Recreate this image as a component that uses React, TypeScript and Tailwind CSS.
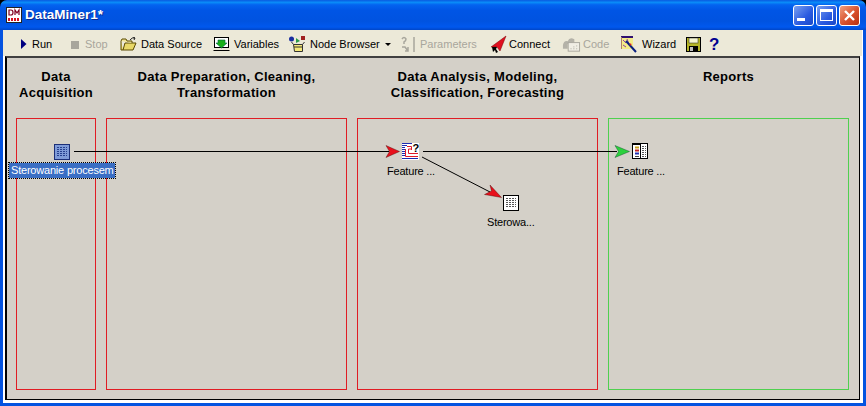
import React from "react";

const Ui = "font-['Liberation_Sans',Arial,sans-serif]";

const RunIcon = () => (
  <svg width="6" height="10" viewBox="0 0 6 10"><path d="M0 0 L5.500 5 L0 10 Z" fill="#000080" /></svg>
);
const StopIcon = () => <div className="w-[8px] h-[8px] bg-[#a8a69c] mt-[1px]" />;
const FolderIcon = () => (
  <svg width="17" height="14" viewBox="0 0 17 14">
    <path d="M1 4 L1 13 L13 13 L16 6 L5 6 L3 13" fill="#e8d868" stroke="#5a4a00" />
    <path d="M1 4 L2 2 L6 2 L7 4 L12 4 L12 6" fill="#f0e498" stroke="#5a4a00" />
    <path d="M10 3 Q12 0 15 1 M15 1 L13 0 M15 1 L14 3" fill="none" stroke="#222" />
  </svg>
);
const VariablesIcon = () => (
  <svg width="17" height="16" viewBox="0 0 17 16">
    <rect x="1.500" y="1.500" width="14" height="10" fill="#fff" stroke="#000" />
    <path d="M0.500 14.500 H16.500" stroke="#000" />
    <path d="M5 4 H12 V7 H14 L8.500 12 L3 7 H5 Z" fill="#18b018" stroke="#064" strokeWidth="0.600" />
  </svg>
);
const NodeBrowserIcon = () => (
  <svg width="17" height="17" viewBox="0 0 17 17">
    <circle cx="2.500" cy="3" r="2.500" fill="#1a2ea0" />
    <rect x="12" y="0" width="4" height="4" fill="#a02020" />
    <path d="M7 2 L11 5 L7 7 Z" fill="#2a9a4a" />
    <path d="M4.500 8.500 L13.500 8.500 L13.500 15.500 L5.500 15.500 Z" fill="#f4e878" stroke="#333" />
    <path d="M4.500 8.500 L2.500 6 M13.500 8.500 L15.500 6 M5 11 H13" stroke="#333" fill="none" />
  </svg>
);
const ParametersIcon = () => (
  <svg width="16" height="17" viewBox="0 0 16 17" fill="none" stroke="#a8a69c" strokeWidth="1.500">
    <path d="M2 3 Q4 0 6 3 Q6 5 4 6 V8" />
    <path d="M2 11 H5 L8 15 M8 11 V15 H5" />
    <path d="M14 1 V16" />
  </svg>
);
const ConnectIcon = () => (
  <svg width="17" height="19" viewBox="0 0 17 19">
    <path d="M16 1 L1 12 L7 12 L10 16 Z" fill="#e01020" stroke="#700" strokeWidth="0.500" />
    <path d="M2 12 L7 12 L6 14 L8 17 L6 18 L5 15 L3 17 Z" fill="#000" />
  </svg>
);
const CodeIcon = () => (
  <svg width="19" height="17" viewBox="0 0 20 17">
    <path d="M1 9 Q2 4 6 5 Q8 0 13 3 L13 6 L6 8 L6 13 L1 13 Z" fill="#b4b2a8" />
    <rect x="6.500" y="6.500" width="12" height="9" fill="#f0eee4" stroke="#a8a69c" />
    <path d="M9 13 H10 M12 13 H13 M15 13 H16 M15 10 H16 M12 11 H13" stroke="#a8a69c" />
  </svg>
);
const WizardIcon = () => (
  <svg width="17" height="17" viewBox="0 0 17 17">
    <rect x="1" y="1" width="12" height="12" fill="#f4ec88" />
    <path d="M1 1 H13" stroke="#301070" strokeWidth="2" />
    <path d="M1.500 1 V13" stroke="#b08060" />
    <path d="M3 4 L6 7 M7 3 L9 8 M3 9 L6 11" stroke="#9040a0" />
    <path d="M6 5 L16 16" stroke="#0a2080" strokeWidth="2" />
    <path d="M10 8 L11 9" stroke="#e02020" strokeWidth="2" />
  </svg>
);
const SaveIcon = () => (
  <svg width="15" height="15" viewBox="0 0 15 15">
    <rect x="0.500" y="0.500" width="14" height="14" fill="#b4b428" stroke="#000" />
    <rect x="3" y="1" width="9" height="5" fill="#f4f4d0" stroke="#222" strokeWidth="0.500" />
    <rect x="3" y="9" width="9" height="5" fill="#000" />
    <rect x="4" y="10" width="3" height="4" fill="#c0c0c0" />
  </svg>
);

const DataIcon = ({ selected }: { selected?: boolean }) => (
  <svg width="16" height="16" viewBox="0 0 16 16">
    <rect x="0.500" y="0.500" width="15" height="15" fill={selected ? "#7f9bd8" : "#fff"} stroke={selected ? "#1c2f78" : "#000"} />
    {[3, 5, 7, 9, 11].map((y) => (
      <path key={y} d={`M3 ${y + 0.5} H13`} stroke={selected ? "#26408f" : "#555"} strokeDasharray="2 1" />
    ))}
  </svg>
);
const FeatureIcon = () => (
  <svg width="17" height="17" viewBox="0 0 17 17">
    <rect width="17" height="17" fill="#fff" />
    <path d="M0 0.500 H10 M0 2.500 H5 M0 4.500 H3 M0 6.500 H3 M0 8.500 H3 M0 10.500 H3 M0 12.500 H3 M0 15.500 H16" stroke="#1c2ab0" />
    <path d="M5 3.500 H9.500 V7 M3.500 6 V13.500 H16 M6.500 6 V10.500 H16 M6.500 6 H9.500" stroke="#e01828" fill="none" />
    <text x="10.500" y="9" fontSize="11" fontWeight="700" fontFamily="Liberation Sans" fill="#000">?</text>
  </svg>
);
const ReportIcon = () => (
  <svg width="16" height="16" viewBox="0 0 16 16">
    <rect x="0.500" y="0.500" width="15" height="15" fill="#fff" stroke="#000" />
    <path d="M8.500 0 V16 M1 1.500 H8" stroke="#000" />
    <path d="M3 4.500 H7" stroke="#c8a020" strokeWidth="2" />
    <path d="M3 7.500 H7" stroke="#c02020" strokeWidth="2" />
    <path d="M3 10.500 H7" stroke="#2030b0" strokeWidth="2" />
    <path d="M3 13.500 H7" stroke="#444" strokeWidth="1" />
    {[3, 5, 7, 9, 11, 13].map((y) => (
      <path key={y} d={`M10 ${y + 0.5} H14`} stroke="#555" strokeDasharray="2 1" />
    ))}
  </svg>
);

const ToolItem = ({ icon, label, off, width, iconBox }: { icon: React.ReactNode; label: string; off?: boolean; width: string; iconBox: string }) => (
  <div className={`flex items-center shrink-0 ${width}`}>
    <div className={`shrink-0 flex items-center ${iconBox}`}>{icon}</div>
    <span className={`text-[11px] whitespace-nowrap ${off ? "text-[#a8a69c]" : "text-black"}`}>{label}</span>
  </div>
);

const WinButton = ({ className, children }: { className: string; children: React.ReactNode }) => (
  <div className={`w-[21px] h-[21px] rounded-[3px] border border-white flex items-center justify-center ${className}`}>
    {children}
  </div>
);

const Heading = ({ className, children }: { className: string; children: React.ReactNode }) => (
  <div className={`text-center text-[13px] leading-[16px] font-bold text-black shrink-0 tracking-[0.3px] ${className}`}>{children}</div>
);

const NodeLabel = ({ className, children }: { className: string; children: React.ReactNode }) => (
  <div className={`absolute text-[11px] leading-[15px] tracking-[-0.2px] text-black whitespace-nowrap ${className}`}>{children}</div>
);

export default function App() {
  return (
    <div className={`w-[866px] h-[406px] flex flex-col overflow-hidden bg-black ${Ui}`}>
      <div className="rounded-t-[7px] h-[30px] shrink-0 flex items-center pl-[6px] pr-[6px] bg-[linear-gradient(180deg,#0a5ae0_0%,#0a8cf8_8%,#0464f0_16%,#0055e5_35%,#0053e0_70%,#0058ee_90%,#0046c8_100%)]">
        <svg width="16" height="16" viewBox="0 0 16 16" className="mr-[3px]">
          <rect x="0.500" y="0.500" width="15" height="15" fill="#fff" stroke="#222" />
          <path d="M3 3 V8 H5 Q7 8 7 5.500 Q7 3 5 3 Z M9 8 V3 L11 6 L13 3 V8" fill="none" stroke="#800020" strokeWidth="1.200" />
          <path d="M2 12.500 H14" stroke="#d81020" strokeWidth="3" strokeDasharray="2 1" />
        </svg>
        <span className="text-white font-bold text-[13.5px] [text-shadow:1px_1px_0_#0a2a90]">DataMiner1*</span>
        <div className="ml-auto flex gap-[2px]">
          <WinButton className="bg-[linear-gradient(135deg,#7aa0f0,#2a5ae0_60%,#1a48c8)]">
            <div className="w-[8px] h-[3px] bg-white mt-[9px] mr-[5px]" />
          </WinButton>
          <WinButton className="bg-[linear-gradient(135deg,#7aa0f0,#2a5ae0_60%,#1a48c8)]">
            <div className="w-[13px] h-[12px] border border-white border-t-[3px]" />
          </WinButton>
          <WinButton className="bg-[linear-gradient(135deg,#f0a080,#d8502c_55%,#b83010)]">
            <svg width="13" height="13" viewBox="0 0 13 13"><path d="M2 2 L11 11 M11 2 L2 11" stroke="#fff" strokeWidth="2.400" /></svg>
          </WinButton>
        </div>
      </div>

      <div className="flex-1 min-h-0 flex flex-col bg-[#0453e0] px-[3px] pb-[3px]">
        <div className="flex-1 min-h-0 flex flex-col bg-white pb-[3px] pr-[1px]">
          <div className="h-[26px] shrink-0 bg-[#ece9d8] flex items-center pl-[18px] pt-[2px]">
            <ToolItem icon={<RunIcon />} label="Run" width="w-[50px]" iconBox="w-[11px]" />
            <ToolItem icon={<StopIcon />} label="Stop" off width="w-[49px]" iconBox="w-[14px]" />
            <ToolItem icon={<FolderIcon />} label="Data Source" width="w-[93px]" iconBox="w-[21px]" />
            <ToolItem icon={<VariablesIcon />} label="Variables" width="w-[76px]" iconBox="w-[21px]" />
            <ToolItem icon={<NodeBrowserIcon />} label="Node Browser" width="w-[96px]" iconBox="w-[21px]" />
            <div className="w-[15px] shrink-0">
              <div className="w-0 h-0 border-x-[3px] border-x-transparent border-t-[3px] border-t-black" />
            </div>
            <ToolItem icon={<ParametersIcon />} label="Parameters" off width="w-[90px]" iconBox="w-[20px]" />
            <ToolItem icon={<ConnectIcon />} label="Connect" width="w-[72px]" iconBox="w-[19px]" />
            <ToolItem icon={<CodeIcon />} label="Code" off width="w-[58px]" iconBox="w-[21px]" />
            <ToolItem icon={<WizardIcon />} label="Wizard" width="w-[66px]" iconBox="w-[22px]" />
            <div className="w-[23px] shrink-0"><SaveIcon /></div>
            <span className="text-[#000090] font-bold text-[17px] leading-none">?</span>
          </div>

          <div className="flex-1 min-h-0 relative bg-[#d4d0c8] border-t-2 border-l-2 border-t-[#404040] border-l-black border-r border-r-black border-b border-b-black mx-[2px] flex flex-col">
            <div className="flex pl-[9px] pt-[11px] h-[60px] shrink-0 gap-[10px]">
              <Heading className="w-[80px]">Data<br />Acquisition</Heading>
              <Heading className="w-[241px]">Data Preparation, Cleaning,<br />Transformation</Heading>
              <Heading className="w-[241px]">Data Analysis, Modeling,<br />Classification, Forecasting</Heading>
              <Heading className="w-[241px]">Reports</Heading>
            </div>
            <div className="flex pl-[9px] gap-[10px] h-[272px] shrink-0">
              <div className="w-[80px] border border-[#e01c24]" />
              <div className="w-[241px] border border-[#e01c24]" />
              <div className="w-[241px] border border-[#e01c24]" />
              <div className="w-[241px] border border-[#4fd04f]" />
            </div>

            <svg className="absolute left-0 top-0 pointer-events-none" width="852" height="338" viewBox="0 0 852 338">
              <path d="M67 93.500 H382" stroke="#000" />
              <path d="M416 93.500 H610" stroke="#000" />
              <path d="M415 99 L483 134" stroke="#000" />
              <path d="M379 87.500 L392.500 93.500 L379 99.500 L382.500 93.500 Z" fill="#e8101c" stroke="#400" strokeWidth="0.400" />
              <path d="M608 87.500 L622.500 93.500 L608 99.500 L611.500 93.500 Z" fill="#2cd03c" stroke="#042" strokeWidth="0.400" />
              <path d="M494.500 139.500 L483 127 L484.500 133 L477.500 136.500 Z" fill="#e8101c" stroke="#400" strokeWidth="0.400" />
            </svg>

            <div className="absolute left-[47px] top-[86px]"><DataIcon selected /></div>
            <div className="absolute left-[2px] top-[105px] h-[15px] w-[106px] bg-[#3a6ec4] outline-dotted outline-1 outline-black text-white text-[11px] leading-[15px] tracking-[-0.2px] px-[2px] whitespace-nowrap">Sterowanie procesem</div>

            <div className="absolute left-[395px] top-[85px]"><FeatureIcon /></div>
            <NodeLabel className="left-[380px] top-[106px]">Feature ...</NodeLabel>

            <div className="absolute left-[496px] top-[137px]"><DataIcon /></div>
            <NodeLabel className="left-[480px] top-[157px]">Sterowa...</NodeLabel>

            <div className="absolute left-[625px] top-[85px]"><ReportIcon /></div>
            <NodeLabel className="left-[610px] top-[106px]">Feature ...</NodeLabel>
          </div>
        </div>
      </div>
    </div>
  );
}
